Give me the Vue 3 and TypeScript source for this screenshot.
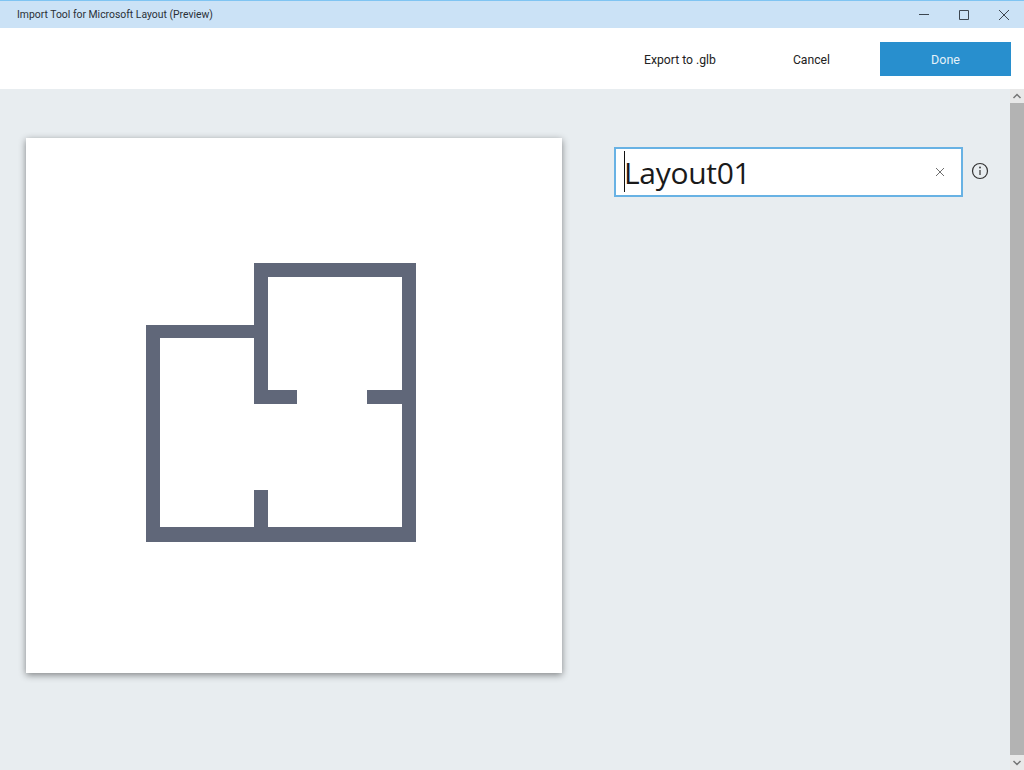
<script setup lang="ts">
	const title = "Import Tool for Microsoft Layout (Preview)";
	const layoutName = "Layout01";
</script>

<template>
	<div class="window">
		<div class="titlebar">
			<span class="title">{{ title }}</span>
			<div class="controls">
				<svg class="ctl" width="40" height="27" viewBox="0 0 40 27"><path d="M15 13.5H25" /></svg>
				<svg class="ctl" width="40" height="27" viewBox="0 0 40 27"><path d="M15.5 9.5H24.5V18.5H15.5Z" /></svg>
				<svg class="ctl" width="40" height="27" viewBox="0 0 40 27"><path d="M15 9L25 19M25 9L15 19" /></svg>
			</div>
		</div>
		<div class="toolbar">
			<button class="flat export">Export to .glb</button>
			<button class="flat cancel">Cancel</button>
			<button class="done">Done</button>
		</div>
		<div class="main">
			<div class="content">
				<div class="card">
					<svg class="plan" width="270" height="279" viewBox="0 0 270 279">
						<path
							d="M108 0H270V279H0V62H108ZM122 14V127H151V141H108V75H14V264H108V227H122V264H256V141H221V127H256V14Z"
							fill-rule="evenodd"
						/>
					</svg>
				</div>
				<div class="form">
					<div class="field">
						<i class="caret"></i>
						<span class="value">{{ layoutName }}</span>
						<svg class="clear" width="10" height="10" viewBox="0 0 10 10"><path d="M1 1L9 9M9 1L1 9" /></svg>
					</div>
					<svg class="info" width="18" height="18" viewBox="0 0 18 18">
						<circle cx="9" cy="9" r="7.5" />
						<path d="M9 8V13" />
						<circle class="dot" cx="9" cy="5.5" r="0.9" />
					</svg>
				</div>
			</div>
			<div class="scrollbar">
				<svg class="arrow" width="14" height="14" viewBox="0 0 14 14"><path d="M3.5 9L7 5.5L10.5 9" /></svg>
				<div class="thumb"></div>
				<svg class="arrow" width="14" height="15" viewBox="0 0 14 15"><path d="M3.5 6L7 9.5L10.5 6" /></svg>
			</div>
		</div>
	</div>
</template>

<style scoped>
	.window {
		display: flex;
		flex-direction: column;
		width: 1024px;
		height: 770px;
		font-family: Roboto, "Open Sans", sans-serif;
		color: #222;
	}

	.titlebar {
		display: flex;
		align-items: center;
		justify-content: space-between;
		height: 27px;
		border-top: 1px solid #7fc4f2;
		background-color: #cbe2f6;
	}

	.title {
		padding-left: 17px;
		font-size: 10.4px;
		color: #2a3036;
	}

	.controls {
		display: flex;
	}

	.ctl {
		fill: none;
		stroke: #3c4650;
		stroke-width: 1;
	}

	.toolbar {
		display: flex;
		align-items: center;
		height: 60px;
		padding: 1px 13px 0 0;
		justify-content: flex-end;
		background-color: #fff;
	}

	.flat {
		border: none;
		padding: 2px 0 0;
		background: none;
		font: inherit;
		font-size: 12.2px;
		color: #222;
	}

	.export {
		margin-right: 77px;
	}

	.cancel {
		margin-right: 50px;
	}

	.done {
		width: 131px;
		height: 34px;
		border: none;
		padding: 0;
		background-color: #288fce;
		font: inherit;
		font-size: 12.5px;
		color: #e4f1f9;
	}

	.main {
		display: flex;
		flex: 1;
		min-height: 0;
		background-color: #e8edf0;
	}

	.content {
		display: flex;
		flex: 1;
		align-items: flex-start;
		padding: 49px 0 0 26px;
	}

	.card {
		display: flex;
		flex: none;
		box-sizing: border-box;
		width: 536px;
		height: 535px;
		padding: 125px 0 0 120px;
		background-color: #fff;
		box-shadow: 0 2px 7px rgba(0, 0, 0, 0.45);
	}

	.plan {
		fill: #606779;
		filter: blur(0.4px);
	}

	.form {
		display: flex;
		align-items: center;
		gap: 8px;
		margin: 9px 0 0 52px;
	}

	.field {
		display: flex;
		align-items: center;
		box-sizing: border-box;
		width: 349px;
		height: 50px;
		padding-left: 8px;
		border: 2px solid #68b2e4;
		background-color: #fff;
	}

	.caret {
		width: 1px;
		height: 41px;
		margin-bottom: 1px;
		background-color: #111;
	}

	.value {
		margin-left: -1px;
		font-family: "Open Sans", sans-serif;
		font-size: 30px;
		letter-spacing: -0.3px;
		color: #1a1a1a;
	}

	.clear {
		margin-left: auto;
		margin-right: 16px;
		fill: none;
		stroke: #6f6f6f;
		stroke-width: 1;
	}

	.info {
		margin-bottom: 2px;
		fill: none;
		stroke: #333;
		stroke-width: 1.2;
	}

	.info .dot {
		fill: #333;
		stroke: none;
	}

	.scrollbar {
		display: flex;
		flex-direction: column;
		width: 14px;
		background-color: #e8e8e8;
	}

	.thumb {
		flex: 1;
		background-color: #b3b3b3;
	}

	.arrow {
		flex: none;
		fill: none;
		stroke: #767676;
		stroke-width: 1.5;
	}
</style>

<style>
	html,
	body {
		overflow: hidden;
	}
</style>
